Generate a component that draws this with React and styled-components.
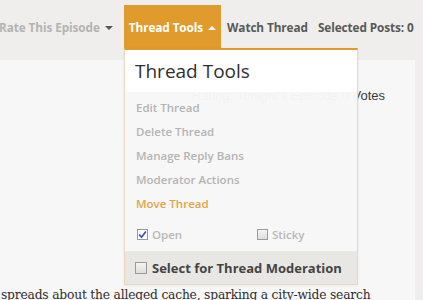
import React from 'react'
import styled, { createGlobalStyle } from 'styled-components'

const GlobalStyle = createGlobalStyle`
    html, body {
        margin: 0;
        padding: 0;
        background: #efeeec;
        overflow: hidden;
    }
    body {
        font-family: 'Open Sans', 'Liberation Sans', sans-serif;
    }
`

const Page = styled.div`
    position: relative;
    width: 423px;
    height: 300px;
    overflow: hidden;
    background: #efeeec;
`

const NavBar = styled.div`
    display: flex;
    align-items: stretch;
    height: 44px;
    padding-top: 5px;
    margin-left: -1px;
`

const NavItem = styled.div`
    display: flex;
    align-items: center;
    gap: 5px;
    padding: 0 ${p => p.$pad || 0}px;
    margin-right: ${p => p.$gap || 0}px;
    font-size: 11.8px;
    font-weight: 700;
    letter-spacing: -0.1px;
    white-space: nowrap;
    color: ${p => p.$active ? '#fff' : p.$muted ? '#b3b3b3' : '#595959'};
    background: ${p => p.$active ? '#e09b2c' : 'transparent'};
`

const Caret = styled.span`
    width: 0;
    height: 0;
    border-left: 4px solid transparent;
    border-right: 4px solid transparent;
    ${p => p.$up
        ? `border-bottom: 4px solid ${p.$color};`
        : `border-top: 4px solid ${p.$color};`}
    margin-top: 1px;
`

const Panel = styled.div`
    margin-top: 11px;
    width: 415px;
    height: 240px;
    background: #f7f7f7;
    display: flex;
    flex-direction: column;
`

const RatingRow = styled.div`
    display: flex;
    justify-content: flex-end;
    padding: 28px 30px 0 0;
    font-family: 'Liberation Sans', Arial, sans-serif;
    font-size: 13px;
    color: #3a3a3a;
`

const Story = styled.p`
    margin: auto 0 0 1px;
    transform: translateY(2px);
    font-family: 'DejaVu Serif', 'Liberation Serif', serif;
    font-size: 12.3px;
    letter-spacing: -0.2px;
    color: #2e2e2e;
    white-space: nowrap;
`

const Dropdown = styled.div`
    position: absolute;
    left: 124px;
    top: 48px;
    width: 232px;
    border: 1px solid #ead9b8;
    border-top: 2px solid #e09b2c;
    box-shadow: 0 1px 3px rgba(0, 0, 0, 0.06);
`

const DropdownHeader = styled.div`
    height: 42px;
    background: #fff;
    padding-left: 10px;
    display: flex;
    align-items: center;
    font-size: 19px;
    font-weight: 500;
    color: #2f2f2f;
`

const DropdownMenu = styled.div`
    background: rgba(247, 247, 247, 0.975);
    padding: 4px 0 5px 11px;
`

const MenuItem = styled.div`
    height: 24px;
    line-height: 24px;
    font-size: 11.5px;
    font-weight: 600;
    color: ${p => p.$highlight ? '#e3a343' : '#b4b4b4'};
`

const CheckRow = styled.div`
    display: grid;
    grid-template-columns: 120px 1fr;
    height: 24px;
    margin-top: 6px;
    padding-left: 1px;
`

const CheckLabel = styled.label`
    display: flex;
    align-items: center;
    gap: 4px;
    font-size: 11.5px;
    font-weight: 600;
    color: ${p => p.$strong ? '#444' : '#b8b8b8'};
    ${p => p.$strong && 'font-size: 13px; font-weight: 700; gap: 5px;'}
`

const Box = styled.span`
    display: inline-flex;
    align-items: center;
    justify-content: center;
    box-sizing: border-box;
    width: ${p => p.$size || 11}px;
    height: ${p => p.$size || 11}px;
    border: 1px solid #9a9a9a;
    background: ${p => p.$checked ? '#fff' : 'linear-gradient(#f4f4f4, #dedede)'};
`

const DropdownFooter = styled.div`
    height: 33px;
    background: #e9e7e3;
    padding-left: 10px;
    display: flex;
    align-items: center;
`

const Check = () => (
    <svg width="9" height="9" viewBox="0 0 9 9">
        <path d="M1.2 4.6 L3.5 7.2 L7.9 1.4" fill="none" stroke="#3f4fc4" strokeWidth="1.7" />
    </svg>
)

export default function App() {
    const items = ['Edit Thread', 'Delete Thread', 'Manage Reply Bans', 'Moderator Actions']

    return (
        <Page>
            <GlobalStyle />
            <NavBar>
                <NavItem $muted $gap={11}>
                    Rate This Episode <Caret $color="#555" />
                </NavItem>
                <NavItem $active $pad={5} $gap={6}>
                    Thread Tools <Caret $up $color="#fff" />
                </NavItem>
                <NavItem $gap={10}>Watch Thread</NavItem>
                <NavItem>Selected Posts: 0</NavItem>
            </NavBar>
            <Panel>
                <RatingRow>Rating: Tonight's Episode 0 Votes</RatingRow>
                <Story>spreads about the alleged cache, sparking a city-wide search</Story>
            </Panel>
            <Dropdown>
                <DropdownHeader>Thread Tools</DropdownHeader>
                <DropdownMenu>
                    {items.map(item => <MenuItem key={item}>{item}</MenuItem>)}
                    <MenuItem $highlight>Move Thread</MenuItem>
                    <CheckRow>
                        <CheckLabel><Box $checked><Check /></Box>Open</CheckLabel>
                        <CheckLabel><Box />Sticky</CheckLabel>
                    </CheckRow>
                </DropdownMenu>
                <DropdownFooter>
                    <CheckLabel $strong><Box $size={12} />Select for Thread Moderation</CheckLabel>
                </DropdownFooter>
            </Dropdown>
        </Page>
    )
}
